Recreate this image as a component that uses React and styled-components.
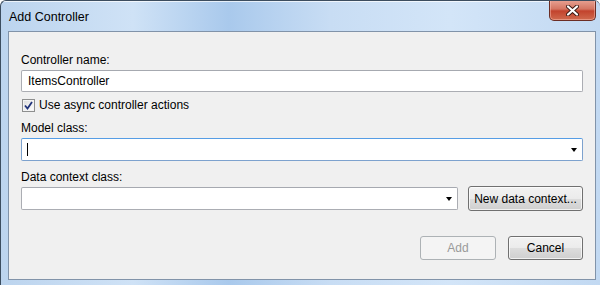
import React from 'react';
import styled, { createGlobalStyle } from 'styled-components';

const GlobalStyle = createGlobalStyle`
  html, body {
    margin: 0;
    padding: 0;
    background: #ffffff;
  }
  body {
    font-family: "Liberation Sans", Arial, sans-serif;
  }
`;

const Window = styled.div`
  box-sizing: border-box;
  width: 600px;
  height: 285px;
  display: flex;
  flex-direction: column;
  border: 1px solid #3c4d5f;
  border-right: none;
  border-bottom: none;
  border-radius: 6px 6px 0 0;
  background: linear-gradient(90deg, #bcd4ee 0%, #cfe2f6 22%, #a9c9ec 38%, #c8ddf4 55%, #d3e5f8 75%, #c2d9f2 100%);
  overflow: hidden;
`;

const TitleBar = styled.div`
  height: 30px;
  display: flex;
  justify-content: space-between;
  align-items: flex-start;
  padding-left: 8px;
  padding-right: 4px;
  box-shadow: inset 0 1px 0 rgba(255, 255, 255, 0.7);
`;

const Title = styled.div`
  font-size: 12.5px;
  color: #000;
  line-height: 16px;
  margin-top: 8px;
`;

const CloseButton = styled.div`
  box-sizing: border-box;
  width: 47px;
  height: 21px;
  margin-top: -1px;
  display: flex;
  align-items: center;
  justify-content: center;
  border: 1px solid #6b2d24;
  border-top: none;
  border-radius: 0 0 5px 5px;
  background: linear-gradient(180deg, #e8a394 0%, #d47562 45%, #c2432d 55%, #d06a4e 100%);
  box-shadow: inset 0 0 0 1px rgba(255, 200, 190, 0.45);
`;

const Client = styled.div`
  flex: 1;
  box-sizing: border-box;
  margin: 0 4px 5px 7px;
  border: 1px solid #8193a9;
  background: #f0f0f0;
  display: flex;
  flex-direction: column;
  padding: 20px 12px 0 12px;
`;

const Label = styled.div`
  font-size: 12px;
  line-height: 16px;
  color: #000;
  margin-top: ${(p) => p.$top || 0}px;
`;

const TextBox = styled.div`
  box-sizing: border-box;
  height: 22px;
  margin-top: 2px;
  border: 1px solid #abadb3;
  border-top-color: #a6a9b0;
  border-radius: 2px;
  background: #fff;
  padding-left: 6px;
  display: flex;
  align-items: center;
  font-size: 12px;
  color: #000;
`;

const CheckRow = styled.label`
  display: flex;
  align-items: center;
  gap: 4px;
  height: 18px;
  margin-top: 4px;
  padding-left: 1px;
  font-size: 12px;
  color: #000;
`;

const CheckBox = styled.span`
  box-sizing: border-box;
  width: 13px;
  height: 13px;
  border: 1px solid #8e8f8f;
  background: linear-gradient(135deg, #dcdcdc 0%, #f5f5f5 70%, #ffffff 100%);
  box-shadow: inset 0 0 0 1px #f4f4f4;
  display: flex;
  align-items: center;
  justify-content: center;
`;

const Combo = styled.div`
  box-sizing: border-box;
  height: 23px;
  flex: ${(p) => (p.$grow ? 1 : 'none')};
  margin-top: ${(p) => p.$top || 0}px;
  border: 1px solid ${(p) => (p.$focused ? '#7da2ce' : '#abadb3')};
  border-top-color: ${(p) => (p.$focused ? '#569de5' : '#a6a9b0')};
  border-radius: 2px;
  background: #fff;
  display: flex;
  align-items: center;
  justify-content: space-between;
  padding: 0 4px 0 5px;
`;

const Caret = styled.span`
  width: 1px;
  height: 13px;
  background: #000;
`;

const Arrow = styled.span`
  width: 0;
  height: 0;
  margin-left: auto;
  border-left: 3.5px solid transparent;
  border-right: 3.5px solid transparent;
  border-top: 4px solid #000;
  margin-right: 1px;
  margin-top: 1px;
`;

const Row = styled.div`
  display: flex;
  align-items: center;
  gap: 10px;
  margin-top: ${(p) => p.$top || 0}px;
  justify-content: ${(p) => p.$end ? 'flex-end' : 'flex-start'};
  gap: ${(p) => p.$gap || 10}px;
`;

const Button = styled.button`
  box-sizing: border-box;
  width: ${(p) => p.$width}px;
  height: ${(p) => p.$height || 24}px;
  padding: 0;
  font-family: "Liberation Sans", Arial, sans-serif;
  font-size: 12px;
  border-radius: 3px;
  border: 1px solid ${(p) => (p.disabled ? '#adb2b5' : '#707070')};
  color: ${(p) => (p.disabled ? '#9a9a9a' : '#000')};
  background: ${(p) =>
    p.disabled
      ? '#f4f4f4'
      : 'linear-gradient(180deg, #f2f2f2 0%, #ebebeb 50%, #dddddd 51%, #cfcfcf 100%)'};
  box-shadow: ${(p) => (p.disabled ? 'none' : 'inset 0 0 0 1px rgba(255,255,255,0.7)')};
`;

export default function App() {
  return (
    <>
      <GlobalStyle />
      <Window>
        <TitleBar>
          <Title>Add Controller</Title>
          <CloseButton>
            <svg width="13" height="11" viewBox="0 0 13 11">
              <path
                d="M2 1.5 L11 9.5 M11 1.5 L2 9.5"
                stroke="#3a1a14"
                strokeWidth="4"
                strokeLinecap="round"
              />
              <path
                d="M2 1.5 L11 9.5 M11 1.5 L2 9.5"
                stroke="#ffffff"
                strokeWidth="2.2"
                strokeLinecap="round"
              />
            </svg>
          </CloseButton>
        </TitleBar>
        <Client>
          <Label>Controller name:</Label>
          <TextBox>ItemsController</TextBox>
          <CheckRow>
            <CheckBox>
              <svg width="9" height="9" viewBox="0 0 9 9">
                <path d="M1 4.5 L3.5 7.5 L8 1" fill="none" stroke="#21337a" strokeWidth="1.8" />
              </svg>
            </CheckBox>
            Use async controller actions
          </CheckRow>
          <Label $top={6}>Model class:</Label>
          <Combo $focused $top={2}>
            <Caret />
            <Arrow />
          </Combo>
          <Label $top={8}>Data context class:</Label>
          <Row $top={1}>
            <Combo $grow>
              <Arrow />
            </Combo>
            <Button $width={115} $height={25}>New data context...</Button>
          </Row>
          <Row $top={25} $end $gap={12}>
            <Button $width={76} disabled>Add</Button>
            <Button $width={75}>Cancel</Button>
          </Row>
        </Client>
      </Window>
    </>
  );
}
